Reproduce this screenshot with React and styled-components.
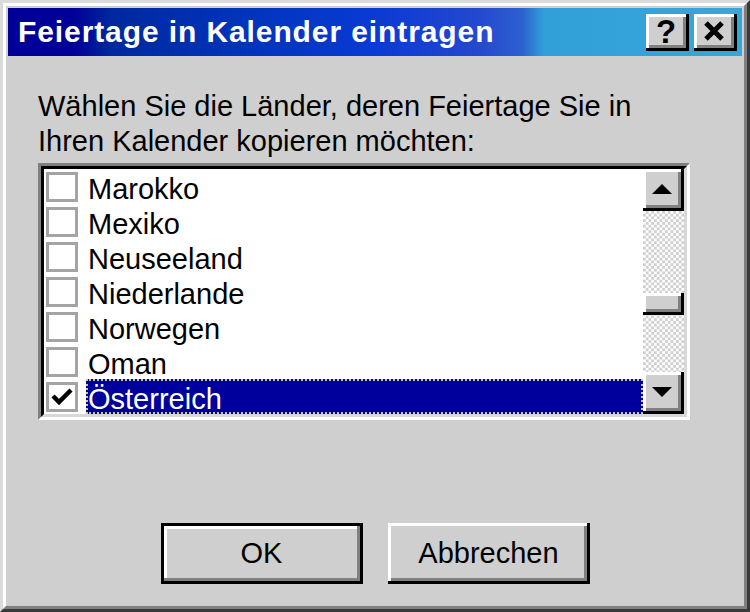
import React from "react";
import styled, { createGlobalStyle } from "styled-components";

const Global = createGlobalStyle`
  html, body { margin: 0; padding: 0; overflow: hidden; background: #cfcfcf; }
  * { box-sizing: border-box; }
`;

const FACE = "#cfcfcf";

const Window = styled.div`
  width: 750px;
  height: 612px;
  background: ${FACE};
  border: 3px solid;
  border-color: #dadada #3a3a3a #3a3a3a #dadada;
  display: flex;
`;

const WindowInner = styled.div`
  flex: 1;
  border: 3px solid;
  border-color: #ffffff #808080 #808080 #ffffff;
  padding: 2px;
  display: flex;
  flex-direction: column;
  font-family: "Liberation Sans", Arial, sans-serif;
`;

const TitleBar = styled.div`
  height: 48px;
  flex: none;
  display: flex;
  align-items: center;
  justify-content: space-between;
  padding: 0 5px 0 10px;
  background: linear-gradient(
    to right,
    #000098 0%,
    #000098 9%,
    #00289e 14%,
    #0033b8 30%,
    #0a3ad4 50%,
    #2448d0 64%,
    #2c60d0 70%,
    #30a0d8 73%,
    #38a6da 100%
  );
`;

const TitleText = styled.span`
  color: #ffffff;
  font-weight: bold;
  font-size: 30px;
  letter-spacing: 0.9px;
  white-space: nowrap;
`;

const TitleButtons = styled.div`
  display: flex;
  gap: 5px;
  margin-top: 1px;
`;

const bevel = `
  background: ${FACE};
  box-shadow: inset -3px -3px #000000, inset 3px 3px #ffffff, inset -6px -6px #808080;
`;

const TitleButton = styled.div`
  width: 43px;
  height: 37px;
  ${bevel}
  display: flex;
  align-items: center;
  justify-content: center;
  font-weight: bold;
  font-size: 33px;
  color: #000;
  padding: 0 3px 3px 0;
  line-height: 1;
`;

const Body = styled.div`
  flex: 1;
  display: flex;
  flex-direction: column;
  padding: 33px 0 0 30px;
`;

const Prompt = styled.p`
  margin: 0;
  font-size: 29px;
  line-height: 35px;
  color: #000;
`;

const ListBox = styled.div`
  margin-top: 4px;
  width: 652px;
  height: 257px;
  border: 3px solid;
  border-color: #808080 #ffffff #ffffff #808080;
  display: flex;
`;

const ListInner = styled.div`
  flex: 1;
  border: 3px solid;
  border-color: #000000 #d8d8d8 #d8d8d8 #000000;
  background: #ffffff;
  display: flex;
`;

const Rows = styled.div`
  flex: 1;
  display: flex;
  flex-direction: column;
`;

const Row = styled.div`
  height: 35px;
  display: flex;
  align-items: center;
  padding-left: 2px;
`;

const CheckBox = styled.div`
  width: 32px;
  height: 30px;
  border: 3px solid #a4a4a4;
  background: #ffffff;
  display: flex;
  align-items: center;
  justify-content: center;
  margin-right: 8px;
`;

const Label = styled.div`
  flex: 1;
  height: 35px;
  font-size: 29px;
  line-height: 31px;
  padding-top: 3px;
  border: 2px ${(p) => (p.$selected ? "dotted #cfc690" : "solid transparent")};
  background: ${(p) => (p.$selected ? "#00009c" : "transparent")};
  color: ${(p) => (p.$selected ? "#ffffff" : "#000000")};
`;

const ScrollBar = styled.div`
  width: 41px;
  display: flex;
  flex-direction: column;
`;

const ScrollButton = styled.div`
  height: 42px;
  flex: none;
  ${bevel}
  display: flex;
  align-items: center;
  justify-content: center;
  padding: 0 3px 3px 0;
`;

const Track = styled.div`
  flex: 1;
  background-color: #ffffff;
  background-image: conic-gradient(#cfcfcf 25%, transparent 0 50%, #cfcfcf 0 75%, transparent 0);
  background-size: 5.5px 5.5px;
  display: flex;
  flex-direction: column;
`;

const Thumb = styled.div`
  height: 22px;
  margin-top: 82px;
  ${bevel}
`;

const ButtonRow = styled.div`
  display: flex;
  justify-content: center;
  gap: 25px;
  margin-top: 103px;
  margin-left: -30px;
`;

const DialogButton = styled.div`
  width: 202px;
  height: 61px;
  display: flex;
  align-items: center;
  justify-content: center;
  font-size: 29px;
  color: #000;
  background: ${FACE};
  border: ${(p) => (p.$default ? "3px solid #000" : "none")};
  box-shadow: ${(p) =>
    p.$default
      ? "inset -3px -3px #808080, inset 3px 3px #ffffff"
      : "inset -3px -3px #000000, inset 3px 3px #ffffff, inset -6px -6px #808080"};
`;

const countries = ["Marokko", "Mexiko", "Neuseeland", "Niederlande", "Norwegen", "Oman", "Österreich"];

const Check = () => (
  <svg width="22" height="20" viewBox="0 0 22 20">
    <path d="M2 9 L8 15 L20 3" fill="none" stroke="#000" strokeWidth="4.5" />
  </svg>
);

const CloseGlyph = () => (
  <svg width="22" height="22" viewBox="0 0 22 22">
    <path d="M3 3 L19 19 M19 3 L3 19" fill="none" stroke="#000" strokeWidth="5" />
  </svg>
);

const Arrow = ({ down }) => (
  <svg width="20" height="10" viewBox="0 0 20 10">
    <path d={down ? "M0 0 H20 L10 10 Z" : "M10 0 L20 10 H0 Z"} fill="#000" />
  </svg>
);

export default function App() {
  return (
    <>
      <Global />
      <Window>
        <WindowInner>
          <TitleBar>
            <TitleText>Feiertage in Kalender eintragen</TitleText>
            <TitleButtons>
              <TitleButton>?</TitleButton>
              <TitleButton>
                <CloseGlyph />
              </TitleButton>
            </TitleButtons>
          </TitleBar>
          <Body>
            <Prompt>
              Wählen Sie die Länder, deren Feiertage Sie in
              <br />
              Ihren Kalender kopieren möchten:
            </Prompt>
            <ListBox>
              <ListInner>
                <Rows>
                  {countries.map((c, i) => {
                    const sel = i === countries.length - 1;
                    return (
                      <Row key={c}>
                        <CheckBox>{sel && <Check />}</CheckBox>
                        <Label $selected={sel}>{c}</Label>
                      </Row>
                    );
                  })}
                </Rows>
                <ScrollBar>
                  <ScrollButton>
                    <Arrow />
                  </ScrollButton>
                  <Track>
                    <Thumb />
                  </Track>
                  <ScrollButton>
                    <Arrow down />
                  </ScrollButton>
                </ScrollBar>
              </ListInner>
            </ListBox>
            <ButtonRow>
              <DialogButton $default>OK</DialogButton>
              <DialogButton>Abbrechen</DialogButton>
            </ButtonRow>
          </Body>
        </WindowInner>
      </Window>
    </>
  );
}
